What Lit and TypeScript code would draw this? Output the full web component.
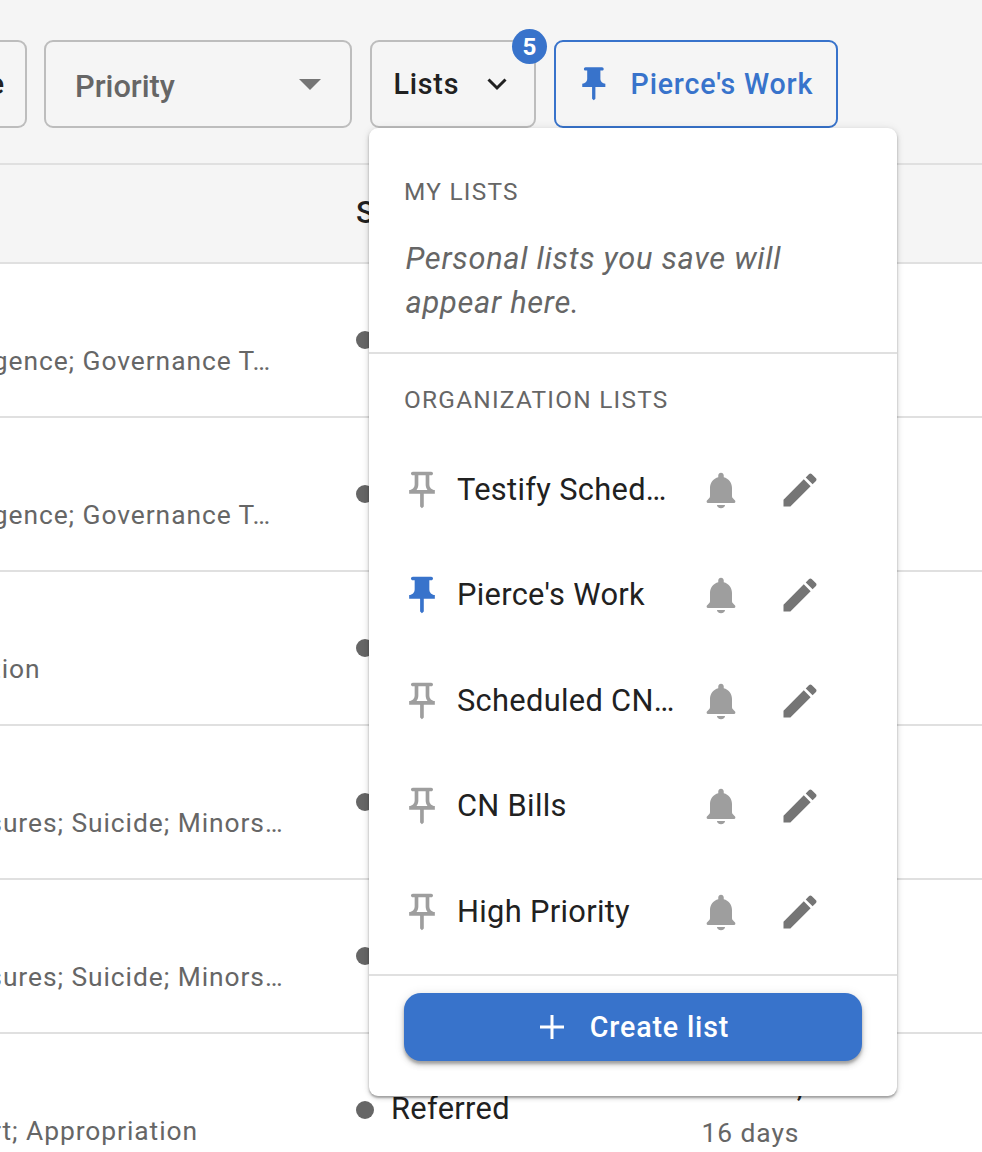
import { LitElement, html, css, svg } from "lit";
import { customElement, property } from "lit/decorators.js";

const PIN = "M16 9V4h1c.55 0 1-.45 1-1s-.45-1-1-1H7c-.55 0-1 .45-1 1s.45 1 1 1h1v5c0 1.66-1.34 3-3 3v2h5.97v7l1 1 1-1v-7H19v-2c-1.66 0-3-1.34-3-3z";
const PIN_OUTLINE = "M14 4v5c0 1.12.37 2.16 1 3H9c.65-.86 1-1.9 1-3V4h4m3-2H7c-.55 0-1 .45-1 1s.45 1 1 1h1v5c0 1.66-1.34 3-3 3v2h5.97v7l1 1 1-1v-7H19v-2c-1.66 0-3-1.34-3-3V4h1c.55 0 1-.45 1-1s-.45-1-1-1z";
const BELL = "M5 19.1c-.5 0-.85-.35-.85-.85 0-.35.25-.65.6-.95l.75-.75c.4-.4.5-.7.5-1.5v-4.1c0-3 1.9-5.2 4.5-5.9v-.9c0-.85.65-1.5 1.5-1.5s1.5.65 1.5 1.5v.9c2.6.7 4.5 2.9 4.5 5.9v4.1c0 .8.1 1.1.5 1.5l.75.75c.35.3.6.6.6.95 0 .5-.35.85-.85.85zM9.8 20.2h4.4c0 1-1 1.75-2.2 1.75s-2.2-.75-2.2-1.75z";
const PENCIL = "M3 17.25V21h3.75L17.81 9.94l-3.75-3.75L3 17.25zM20.71 7.04c.39-.39.39-1.02 0-1.41l-2.34-2.34a.9959.9959 0 0 0-1.41 0l-1.83 1.83 3.75 3.75 1.83-1.83z";

const icon = (d: string, cls: string) =>
  html`<svg class="icon ${cls}" viewBox="0 0 24 24">${svg`<path d=${d}></path>`}</svg>`;

@customElement("bill-table")
class BillTable extends LitElement {
  static styles = css`
    :host { display: block; }
    .head {
      display: grid; grid-template-columns: 356px 1fr; height: 97px;
      border-bottom: 2px solid #e0e0e0; background: #f5f5f5;
      font-size: 30.8px; font-weight: 500; line-height: 95px; color: #212121;
    }
    .row {
      display: grid; grid-template-columns: 356px 346px 1fr; height: 152px;
      border-bottom: 2px solid #e0e0e0; background: #fff;
      font-size: 26.4px; letter-spacing: 0.93px; color: #666;
    }
    .subject { display: flex; padding-top: 81px; line-height: 32px; white-space: nowrap; }
    .subject.tail { justify-content: flex-end; }
    .tail-270 { padding-right: 85px; }
    .tail-282 { padding-right: 72.5px; }
    .tail-39 { padding-right: 315.5px; }
    .tail-196 { padding-right: 158px; }
    .status { display: flex; align-items: center; gap: 17px; height: 36px; padding-top: 58px; color: #212121; font-size: 30.8px; line-height: 38px; letter-spacing: 0.34px; }
    .status span { padding-bottom: 2px; }
    .dot { width: 18px; height: 18px; border-radius: 50%; background: #666; }
    .when { padding-top: 32px; line-height: 40px; }
    .date { color: #212121; font-size: 30.8px; letter-spacing: 0.34px; }
    .days { line-height: 40px; padding-top: 7px; margin-left: -0.5px; }
  `;
  rows: [string, string][] = [
    ["Artificial Intelligence; Governance T…", "tail-270"],
    ["Artificial Intelligence; Governance T…", "tail-270"],
    ["Education", "tail-39"],
    ["Disclosures; Suicide; Minors…", "tail-282"],
    ["Disclosures; Suicide; Minors…", "tail-282"],
    ["Support; Appropriation", "tail-196"],
  ];
  render() {
    return html`
      <div class="head"><span></span><span>Status</span></div>
      ${this.rows.map(([subject, tail], i) => html`
        <div class="row">
          <div class="subject tail ${tail}">${subject}</div>
          <div class="status"><i class="dot"></i>${i === 5 ? html`<span>Referred</span>` : ""}</div>
          ${i === 5 ? html`<div class="when"><div class="date">Feb 14, 2025</div><div class="days">16 days</div></div>` : ""}
        </div>`)}
    `;
  }
}

@customElement("list-item")
class ListItem extends LitElement {
  @property() label = "";
  @property({ type: Boolean }) pinned = false;
  static styles = css`
    :host { display: grid; grid-template-columns: 53px 224px 78px 1fr; align-items: center; height: 105.5px; padding-left: 35px; }
    .icon { display: block; width: 44px; height: 44px; }
    .pin { margin-left: -4px; fill: #9e9e9e; }
    .pin.on { fill: #3873cb; }
    .bell { margin-left: 18px; fill: #9e9e9e; }
    .pencil { margin-left: 18.5px; fill: #757575; }
    .label { font-size: 30.8px; letter-spacing: 0.32px; line-height: 44px; color: #212121; white-space: nowrap; }
  `;
  render() {
    return html`
      ${icon(this.pinned ? PIN : PIN_OUTLINE, this.pinned ? "pin on" : "pin")}
      <span class="label">${this.label}</span>
      ${icon(BELL, "bell")}
      ${icon(PENCIL, "pencil")}
    `;
  }
}

@customElement("lists-menu")
class ListsMenu extends LitElement {
  static styles = css`
    :host {
      display: flex; flex-direction: column; box-sizing: border-box; width: 528px; height: 968px;
      background: #fff; border-radius: 9px;
      box-shadow: 0 2px 2px rgba(0,0,0,.26), 0 2px 5px rgba(0,0,0,.16), 0 0 10px rgba(0,0,0,.07);
    }
    .caption { padding-left: 35px; font-size: 24.4px; letter-spacing: 1.25px; line-height: 34px; color: #666; }
    .mine { box-sizing: border-box; height: 226px; padding-top: 47px; border-bottom: 2px solid #e0e0e0; }
    .empty { width: 430px; padding: 28px 0 0 36.5px; font-size: 30.8px; font-style: italic; letter-spacing: 0.72px; line-height: 44px; color: #666; }
    .org { box-sizing: border-box; height: 622px; padding-top: 29px; border-bottom: 2px solid #e0e0e0; }
    .items { padding-top: 20px; }
    .footer { display: flex; padding: 17px 35px; }
    .create {
      display: flex; flex: 1; align-items: center; justify-content: center; gap: 20px; box-sizing: border-box; height: 68px; padding-right: 3px;
      border-radius: 17px; background: #3873cb; color: #fff; font-size: 28.6px; font-weight: 500; letter-spacing: 0.85px;
      box-shadow: 0 3px 3px rgba(0,0,0,.24), 0 4px 6px rgba(0,0,0,.14), 0 1px 11px rgba(0,0,0,.1);
    }
    .plus { width: 36px; height: 36px; fill: #fff; }
  `;
  lists = ["Testify Sched…", "Pierce's Work", "Scheduled CN…", "CN Bills", "High Priority"];
  render() {
    return html`
      <section class="mine">
        <div class="caption">MY LISTS</div>
        <div class="empty">Personal lists you save will appear here.</div>
      </section>
      <section class="org">
        <div class="caption">ORGANIZATION LISTS</div>
        <div class="items">
          ${this.lists.map((l, i) => html`<list-item .label=${l} ?pinned=${i === 1}></list-item>`)}
        </div>
      </section>
      <div class="footer">
        <div class="create">${icon("M20 13h-7v7h-2v-7H4v-2h7V4h2v7h7z", "plus")}<span>Create list</span></div>
      </div>
    `;
  }
}

@customElement("app-root")
class AppRoot extends LitElement {
  static styles = css`
    :host { display: block; position: relative; width: 982px; height: 1152px; overflow: hidden; background: #fff; font-family: Roboto, sans-serif; }
    .toolbar {
      display: flex; gap: 18px; box-sizing: border-box; height: 165px; padding-top: 40px;
      background: #f5f5f5; border-bottom: 2px solid #e0e0e0;
    }
    .box { position: relative; display: flex; align-items: center; box-sizing: border-box; flex: none; height: 88px; border: 2px solid #bdbdbd; border-radius: 9px; font-weight: 500; white-space: nowrap; }
    .cut { width: 27px; border-left: 0; border-radius: 0 9px 9px 0; justify-content: flex-end; padding-right: 21px; font-size: 28.6px; color: #212121; margin-right: -1px; }
    .priority { width: 308px; justify-content: space-between; padding: 4px 29px 0 29px; font-size: 30.8px; color: #666; }
    .caret { width: 22px; height: 11px; margin-top: -4px; fill: #757575; }
    .lists { width: 166px; padding-left: 21.5px; gap: 27.5px; font-size: 28.6px; letter-spacing: 0.8px; color: #212121; }
    .chev { width: 20px; height: 13px; fill: none; stroke: #212121; stroke-width: 3; }
    .badge { position: absolute; top: -13px; right: -13px; width: 35px; height: 35px; border-radius: 50%; background: #3873cb; color: #fff; font-size: 24.2px; font-weight: 700; line-height: 36px; letter-spacing: 0; text-align: center; }
    .pinned { width: 284px; padding-left: 18px; gap: 17px; border-color: #3873cb; font-size: 28.6px; letter-spacing: 0.8px; color: #3873cb; }
    .pin { width: 39.6px; height: 39.6px; fill: #3873cb; }
    lists-menu { position: absolute; left: 369px; top: 128px; }
  `;
  render() {
    return html`
      <div class="toolbar">
        <div class="box cut">Type</div>
        <div class="box priority"><span>Priority</span><svg class="caret" viewBox="0 0 22 11"><path d="M0 0h22L11 11z"></path></svg></div>
        <div class="box lists"><span>Lists</span><svg class="chev" viewBox="0 0 20 13"><path d="M1.5 1.5 10 10l8.5-8.5"></path></svg><span class="badge">5</span></div>
        <div class="box pinned">${icon(PIN, "pin")}<span>Pierce's Work</span></div>
      </div>
      <bill-table></bill-table>
      <lists-menu></lists-menu>
    `;
  }
}
